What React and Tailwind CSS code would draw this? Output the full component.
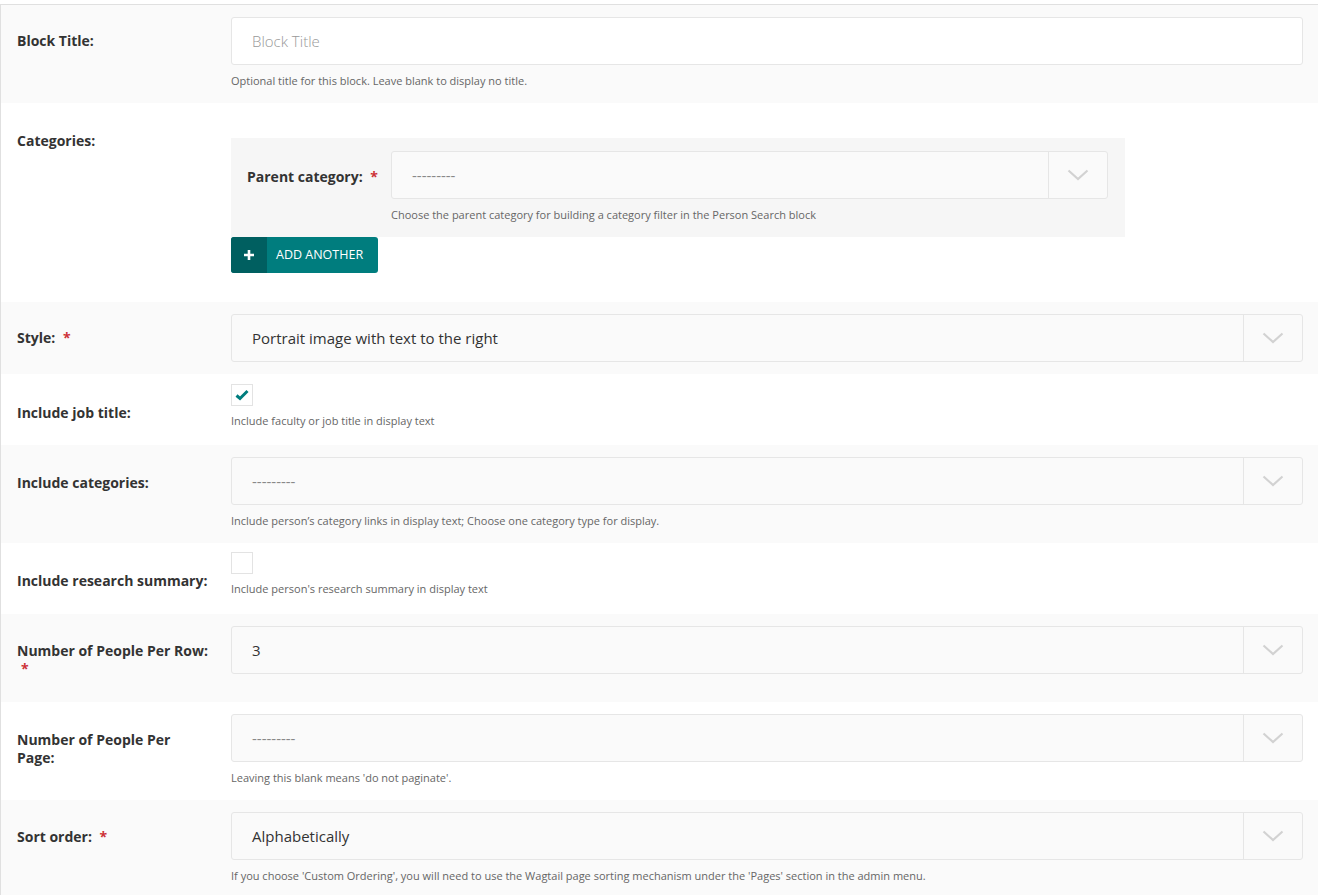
import React from 'react';

const Star = () => (
  <>
    {' '}
    <span className="ml-1 text-[#cd3238]">*</span>
  </>
);

function Chevron() {
  return (
    <svg width="22" height="12" viewBox="0 0 22 12" fill="none">
      <path d="M1.5 1.5 L11 10 L20.5 1.5" stroke="#d2d2d2" strokeWidth="2.2" />
    </svg>
  );
}

function Select({ value, placeholder }) {
  return (
    <div className="flex h-12 w-full items-stretch rounded-[3px] border border-[#e6e6e6] bg-[#fafafa]">
      <div className={`flex flex-1 items-center pl-5 text-[15px] ${placeholder ? 'text-[#888]' : 'text-[#333]'}`}>
        {value}
      </div>
      <div className="flex w-[59px] items-center justify-center border-l border-[#e6e6e6]">
        <Chevron />
      </div>
    </div>
  );
}

function Help({ children, className = '' }) {
  return <p className={`text-[11px] leading-4 text-[#666] ${className}`}>{children}</p>;
}

function Label({ children, className = '' }) {
  return (
    <div className="w-[214px] shrink-0 pr-[18px]">
      <div className={`text-[14px] font-bold leading-[18px] text-[#333] ${className}`}>{children}</div>
    </div>
  );
}

function Checkbox({ checked }) {
  return (
    <div className="flex h-[22px] w-[22px] items-center justify-center border border-[#e3e3e3] bg-white">
      {checked && (
        <svg width="14" height="12" viewBox="0 0 14 12">
          <path d="M1.5 6.5 L5 9.5 L12.5 2" stroke="#007d7e" strokeWidth="3" fill="none" />
        </svg>
      )}
    </div>
  );
}

export default function App() {
  return (
    <div className="min-h-screen bg-white pt-1" style={{ fontFamily: '"Open Sans", "Liberation Sans", sans-serif' }}>
      <div className="border-l border-t border-[#e0e0e0]">
        {/* Block title */}
        <div className="flex bg-[#fafafa] pb-[14px] pl-4 pr-[15px] pt-3">
          <Label className="pt-[15px]">Block Title:</Label>
          <div className="flex-1">
            <div className="flex h-12 items-center rounded-[3px] border border-[#e6e6e6] bg-white pl-5 text-[15px] font-light text-[#999]">
              Block Title
            </div>
            <Help className="mt-2">Optional title for this block. Leave blank to display no title.</Help>
          </div>
        </div>

        {/* Categories */}
        <div className="flex bg-white pb-[29px] pl-4 pr-[15px] pt-3">
          <Label className="pt-[17px]">Categories:</Label>
          <div className="flex-1 pt-[23px]">
            <div className="flex w-[894px] bg-[#f6f6f6] pb-[14px] pl-4 pr-[17px] pt-[13px]">
              <div className="w-[144px] shrink-0 pt-[17px] text-[14px] font-bold leading-[18px] text-[#333]">
                Parent category:<Star />
              </div>
              <div className="flex-1">
                <Select value="---------" placeholder />
                <Help className="mt-2">Choose the parent category for building a category filter in the Person Search block</Help>
              </div>
            </div>
            <button className="flex h-9 w-[147px] items-stretch overflow-hidden rounded-[3px] bg-[#007d7e] text-[12.5px] text-white">
              <span className="flex w-9 items-center justify-center bg-[#005f60]">
                <svg width="12" height="12" viewBox="0 0 12 12">
                  <path d="M6 1 V11 M1 6 H11" stroke="white" strokeWidth="2.6" />
                </svg>
              </span>
              <span className="flex flex-1 items-center pl-[9px]">ADD ANOTHER</span>
            </button>
          </div>
        </div>

        {/* Style */}
        <div className="flex bg-[#fafafa] py-3 pl-4 pr-[15px]">
          <Label className="pt-[15px]">Style:<Star /></Label>
          <div className="flex-1">
            <Select value="Portrait image with text to the right" />
          </div>
        </div>

        {/* Include job title */}
        <div className="flex bg-white pb-4 pl-4 pr-[15px] pt-[10px]">
          <Label className="pt-5">Include job title:</Label>
          <div className="flex-1">
            <Checkbox checked />
            <Help className="mt-[7px]">Include faculty or job title in display text</Help>
          </div>
        </div>

        {/* Include categories */}
        <div className="flex bg-[#fafafa] pb-[14px] pl-4 pr-[15px] pt-3">
          <Label className="pt-[17px]">Include categories:</Label>
          <div className="flex-1">
            <Select value="---------" placeholder />
            <Help className="mt-2">Include person’s category links in display text; Choose one category type for display.</Help>
          </div>
        </div>

        {/* Include research summary */}
        <div className="flex bg-white pb-[17px] pl-4 pr-[15px] pt-[9px]">
          <Label className="pt-5">Include research summary:</Label>
          <div className="flex-1">
            <Checkbox />
            <Help className="mt-[7px]">Include person's research summary in display text</Help>
          </div>
        </div>

        {/* Per row */}
        <div className="flex bg-[#fafafa] pb-[10px] pl-4 pr-[15px] pt-3">
          <Label className="pt-[16px]">Number of People Per Row:<Star /></Label>
          <div className="flex-1 pb-[18px]">
            <Select value="3" />
          </div>
        </div>

        {/* Per page */}
        <div className="flex bg-white pb-[14px] pl-4 pr-[15px] pt-3">
          <Label className="pt-[17px]">
            Number of People Per
            <br />
            Page:
          </Label>
          <div className="flex-1">
            <Select value="---------" placeholder />
            <Help className="mt-2">Leaving this blank means 'do not paginate'.</Help>
          </div>
        </div>

        {/* Sort order */}
        <div className="flex bg-[#fafafa] pb-[14px] pl-4 pr-[15px] pt-3">
          <Label className="pt-[16px]">Sort order:<Star /></Label>
          <div className="flex-1">
            <Select value="Alphabetically" />
            <Help className="mt-2">If you choose 'Custom Ordering', you will need to use the Wagtail page sorting mechanism under the 'Pages' section in the admin menu.</Help>
          </div>
        </div>
      </div>
    </div>
  );
}
